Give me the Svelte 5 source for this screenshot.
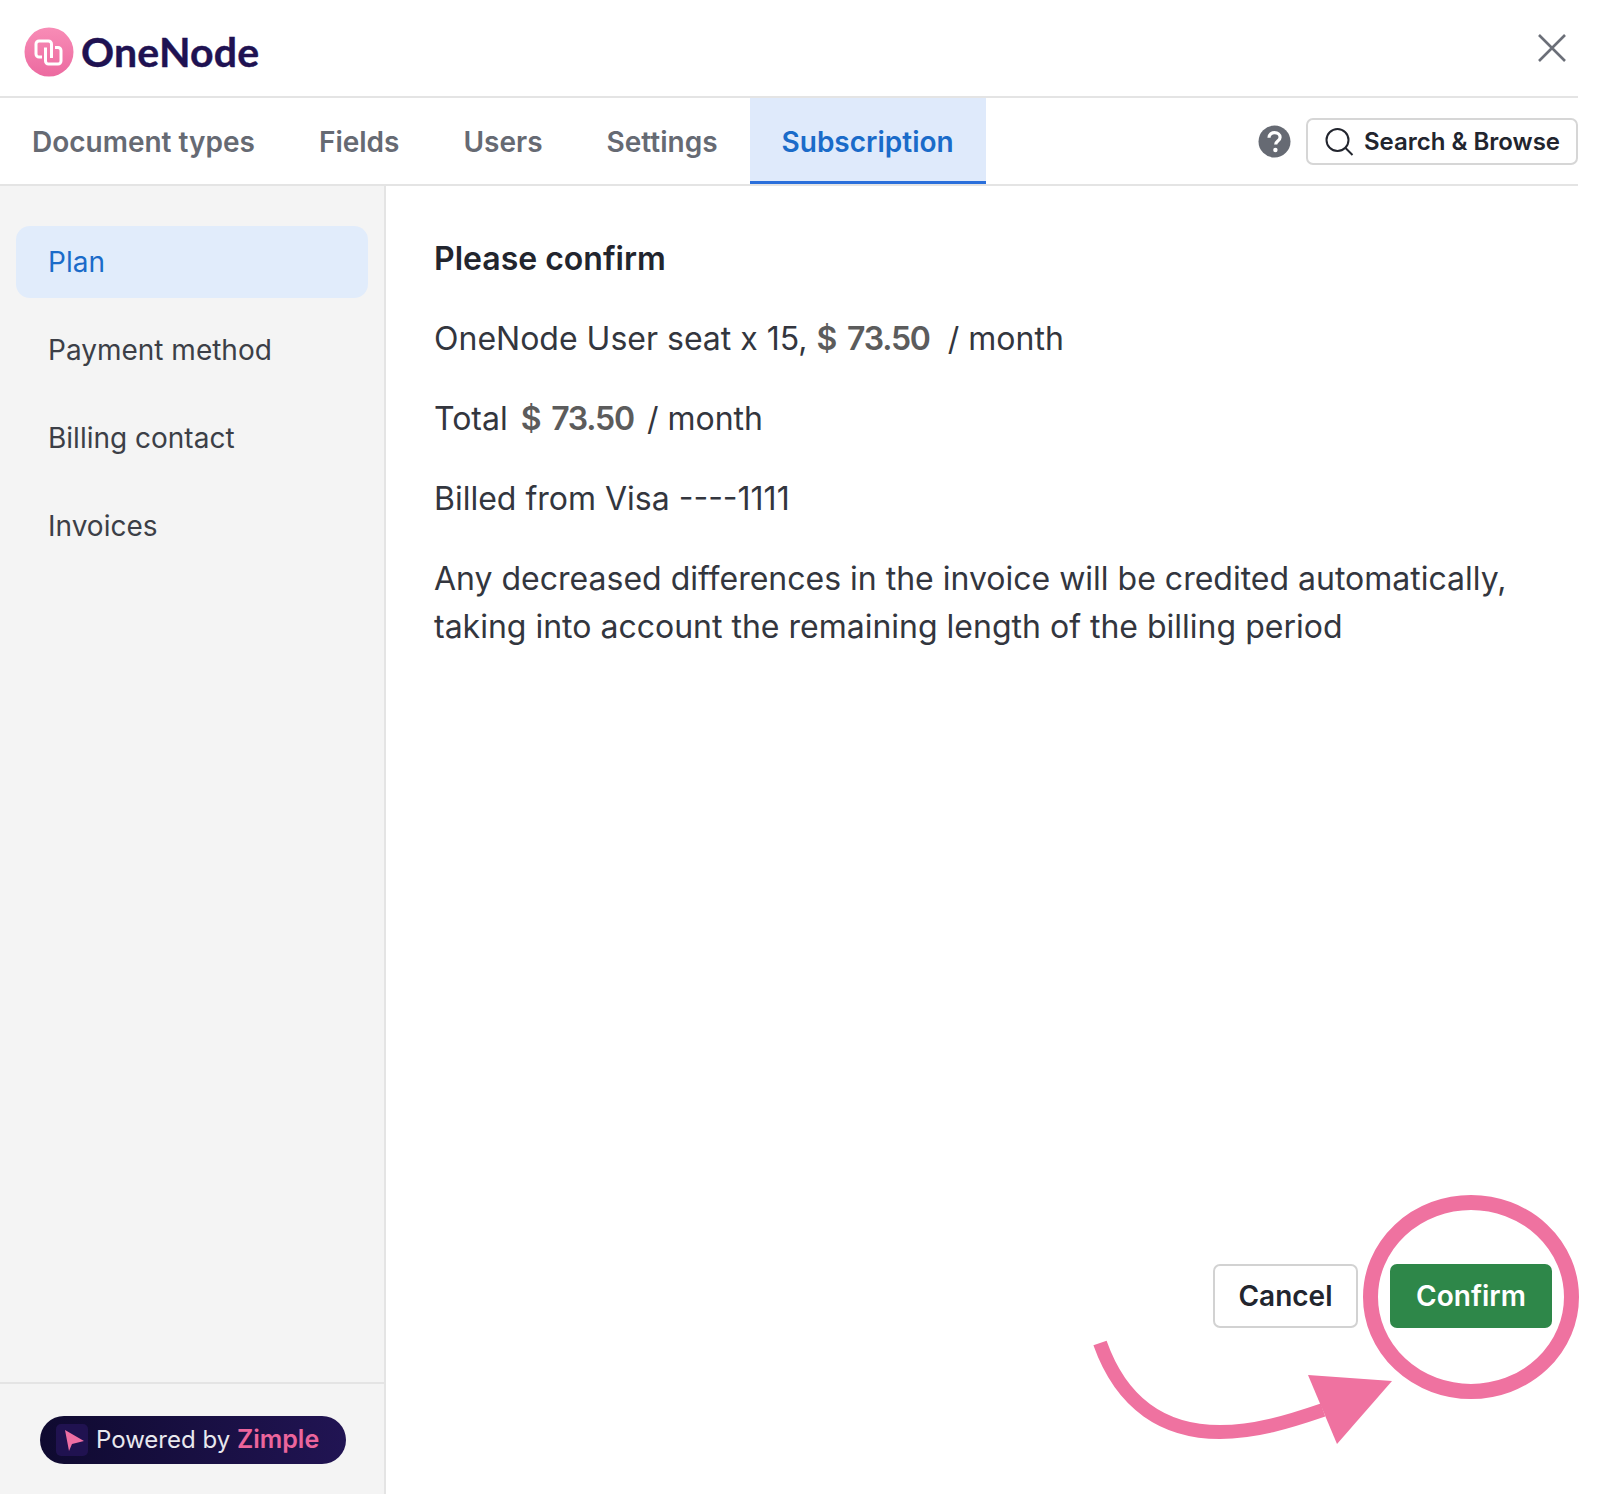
<script>
	const tabs = ["Document types", "Fields", "Users", "Settings", "Subscription"];
	const sideItems = ["Plan", "Payment method", "Billing contact", "Invoices"];
	let activeTab = "Subscription";
	let activeItem = "Plan";
</script>

<div class="modal">
	<header class="top">
		<div class="logo">
			<svg width="50" height="50" viewBox="0 0 50 50">
				<defs>
					<linearGradient id="logoFill" x1="0" y1="0" x2="0" y2="1">
						<stop offset="0" stop-color="#f88cb6" />
						<stop offset="1" stop-color="#ec6aa0" />
					</linearGradient>
				</defs>
				<circle cx="25" cy="25" r="24.500" fill="url(#logoFill)" />
				<g fill="none" stroke="#fff" stroke-width="3">
					<path d="M18 30h-3a3 3 0 0 1-3-3v-10a3 3 0 0 1 3-3h9.500a3 3 0 0 1 3 3v14" />
					<path d="M31 20.500h3a3 3 0 0 1 3 3v10.500a3 3 0 0 1-3 3h-9.500a3 3 0 0 1-3-3v-13.500" />
				</g>
			</svg>
			<span class="wordmark">OneNode</span>
		</div>
		<button class="close" aria-label="Close">
			<svg width="30" height="30" viewBox="0 0 30 30">
				<path d="M2 2l26 26M28 2L2 28" stroke="#6b6f78" stroke-width="2.600" fill="none" />
			</svg>
		</button>
	</header>

	<nav class="tabbar">
		<div class="tabs">
			{#each tabs as tab}
				<div class="tab" class:active={tab === activeTab}>{tab}</div>
			{/each}
		</div>
		<div class="tools">
			<svg class="help" width="33" height="33" viewBox="0 0 33 33">
				<circle cx="16.500" cy="16.500" r="16" fill="#666a73" />
				<path d="M11 12.800c0-3.200 2.500-5.100 5.600-5.100 3.100 0 5.500 1.800 5.500 4.600 0 3.900-4.400 3.700-4.400 7.200" fill="none" stroke="#fff" stroke-width="3.200" />
				<circle cx="17.400" cy="25" r="2.200" fill="#fff" />
			</svg>
			<button class="search">
				<svg width="30" height="30" viewBox="0 0 30 30">
					<circle cx="13.500" cy="13" r="11" fill="none" stroke="#22252e" stroke-width="2" />
					<path d="M21.500 21l7 7" stroke="#22252e" stroke-width="2" fill="none" />
				</svg>
				Search &amp; Browse
			</button>
		</div>
	</nav>

	<div class="body">
		<aside class="side">
			<ul class="menu">
				{#each sideItems as item}
					<li class:active={item === activeItem}>{item}</li>
				{/each}
			</ul>
			<div class="powered">
				<div class="pill">
					<span class="pill-icon">
						<svg width="24" height="24" viewBox="0 0 24 24">
							<path d="M5 2L24 13 12 16 9 23z" fill="#ee6ea3" />
						</svg>
					</span>
					<span class="pill-text">Powered by <b>Zimple</b></span>
				</div>
			</div>
		</aside>

		<main class="content">
			<h2>Please confirm</h2>
			<p>OneNode User seat x 15, <span class="price">$ 73.50</span> &nbsp;/ month</p>
			<p>Total <span class="price pushed">$ 73.50</span> / month</p>
			<p>Billed from Visa ----1111</p>
			<p>Any decreased differences in the invoice will be credited automatically,<br />taking into account the remaining length of the billing period</p>
			<div class="actions">
				<button class="btn cancel">Cancel</button>
				<button class="btn confirm">Confirm</button>
			</div>
		</main>
	</div>

	<svg class="callout" width="520" height="320" viewBox="1080 1180 520 320">
		<ellipse cx="1471" cy="1297" rx="100.500" ry="94.500" fill="none" stroke="#ef72a0" stroke-width="15" />
		<path d="M1100 1343C1122 1405 1165 1432 1220 1432C1255 1432 1288 1422 1323 1410" fill="none" stroke="#ef72a0" stroke-width="14" />
		<path d="M1308 1375L1392 1381L1337 1444z" fill="#ef72a0" />
	</svg>
</div>

<style>
	:global(body) {
		background: #fff;
	}

	.modal {
		position: relative;
		width: 1578px;
		height: 1494px;
		display: flex;
		flex-direction: column;
		font-family: Inter, "Liberation Sans", sans-serif;
		color: #22252e;
		background: #fff;
	}

	.top {
		height: 96px;
		flex: none;
		display: flex;
		align-items: center;
		justify-content: space-between;
		padding: 0 11px 0 24px;
		border-bottom: 2px solid #e4e4e4;
		box-sizing: content-box;
	}

	.logo {
		display: flex;
		align-items: center;
		gap: 7px;
		margin-top: 7px;
	}

	.wordmark {
		font-family: Lato, Inter, sans-serif;
		font-size: 41px;
		font-weight: 700;
		letter-spacing: 0.200px;
		color: #1f1252;
		-webkit-text-stroke: 0.400px #1f1252;
	}

	.close {
		background: none;
		border: 0;
		padding: 0;
		display: flex;
	}

	.tabbar {
		height: 86px;
		flex: none;
		display: flex;
		align-items: stretch;
		justify-content: space-between;
		border-bottom: 2px solid #e4e4e4;
	}

	.tabs {
		display: flex;
	}

	.tab {
		padding: 5px 32px 0;
		display: flex;
		align-items: center;
		font-size: 28px;
		font-weight: 600;
		color: #666a73;
		border-bottom: 3px solid transparent;
	}

	.tab.active {
		background: #dfeafb;
		color: #1a6bc9;
		border-bottom-color: #2a6fdb;
	}

	.tools {
		display: flex;
		align-items: center;
		gap: 15px;
	}

	.search {
		display: flex;
		align-items: center;
		gap: 10px;
		height: 47px;
		margin-top: 1px;
		padding: 0 16px;
		background: #fff;
		border: 2px solid #d6d6d6;
		border-radius: 7px;
		font: 600 24px Inter, "Liberation Sans", sans-serif;
		color: #22252e;
	}

	.body {
		flex: 1;
		display: flex;
		min-height: 0;
	}

	.side {
		width: 386px;
		box-sizing: border-box;
		flex: none;
		display: flex;
		flex-direction: column;
		justify-content: space-between;
		background: #f4f4f4;
		border-right: 2px solid #e4e4e4;
	}

	.menu {
		list-style: none;
		margin: 0;
		padding: 40px 16px 0 16px;
		display: flex;
		flex-direction: column;
		gap: 16px;
		font-size: 28px;
		color: #3c3f47;
	}

	.menu li {
		height: 72px;
		display: flex;
		align-items: center;
		padding-left: 32px;
		border-radius: 14px;
	}

	.menu li.active {
		background: #e1ecfb;
		color: #1a6bc9;
	}

	.powered {
		height: 78px;
		border-top: 2px solid #e4e4e4;
		padding: 32px 0 0 40px;
		box-sizing: content-box;
	}

	.pill {
		width: 306px;
		height: 48px;
		display: flex;
		align-items: center;
		gap: 8px;
		padding-left: 16px;
		box-sizing: border-box;
		border-radius: 24px;
		background: linear-gradient(90deg, #0f0a30, #211453);
		color: #e8e8ee;
		font-size: 24px;
	}

	.pill-text {
		padding-bottom: 2px;
	}

	.pill b {
		font-size: 25px;
		font-weight: 600;
		color: #ec659c;
	}

	.pill-icon {
		width: 32px;
		height: 32px;
		display: flex;
		align-items: center;
		justify-content: center;
		border-radius: 5px;
		background: #201250;
	}

	.content {
		flex: 1;
		min-width: 0;
		display: flex;
		flex-direction: column;
		padding: 49px 0 166px 48px;
	}

	h2 {
		margin: 0 0 32px;
		font-size: 32px;
		line-height: 48px;
		font-weight: 600;
	}

	p {
		margin: 0 0 32px;
		font-size: 32px;
		line-height: 48px;
		color: #33363e;
	}

	.price {
		font-weight: 600;
		color: #5c5c5c;
		letter-spacing: -1.200px;
		word-spacing: 4px;
	}

	.pushed {
		margin: 0 4px;
	}

	.actions {
		margin-top: auto;
		display: flex;
		justify-content: flex-end;
		gap: 32px;
		padding-right: 26px;
	}

	.btn {
		height: 64px;
		border-radius: 7px;
		font: 600 28px Inter, "Liberation Sans", sans-serif;
	}

	.cancel {
		width: 145px;
		background: #fff;
		border: 2px solid #d2d2d2;
		color: #22252e;
	}

	.confirm {
		width: 162px;
		background: #2e8749;
		border: 0;
		color: #fff;
	}

	.callout {
		position: absolute;
		left: 1080px;
		top: 1180px;
		pointer-events: none;
	}
</style>
